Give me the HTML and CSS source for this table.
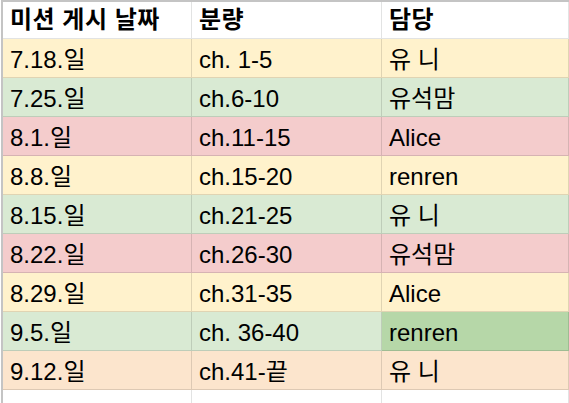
FILE: index.html
```html
<!DOCTYPE html>
<html lang="ko">
<head>
<meta charset="utf-8">
<link rel="stylesheet" href="styles.css">
</head>
<body>
<div class="sheet">
  <div class="row head">
    <div class="cell">미션 게시 날짜</div>
    <div class="cell">분량</div>
    <div class="cell">담당</div>
  </div>
  <div class="row yellow">
    <div class="cell">7.18.일</div>
    <div class="cell">ch. 1-5</div>
    <div class="cell">유 니</div>
  </div>
  <div class="row green">
    <div class="cell">7.25.일</div>
    <div class="cell">ch.6-10</div>
    <div class="cell">유석맘</div>
  </div>
  <div class="row red">
    <div class="cell">8.1.일</div>
    <div class="cell">ch.11-15</div>
    <div class="cell">Alice</div>
  </div>
  <div class="row yellow">
    <div class="cell">8.8.일</div>
    <div class="cell">ch.15-20</div>
    <div class="cell">renren</div>
  </div>
  <div class="row green">
    <div class="cell">8.15.일</div>
    <div class="cell">ch.21-25</div>
    <div class="cell">유 니</div>
  </div>
  <div class="row red">
    <div class="cell">8.22.일</div>
    <div class="cell">ch.26-30</div>
    <div class="cell">유석맘</div>
  </div>
  <div class="row yellow">
    <div class="cell">8.29.일</div>
    <div class="cell">ch.31-35</div>
    <div class="cell">Alice</div>
  </div>
  <div class="row green">
    <div class="cell">9.5.일</div>
    <div class="cell">ch. 36-40</div>
    <div class="cell dark-green">renren</div>
  </div>
  <div class="row peach">
    <div class="cell">9.12.일</div>
    <div class="cell">ch.41-끝</div>
    <div class="cell">유 니</div>
  </div>
  <div class="row empty">
    <div class="cell"></div>
    <div class="cell"></div>
    <div class="cell"></div>
  </div>
</div>
</body>
</html>
```

FILE: styles.css
```css
html, body {
  margin: 0;
  padding: 0;
  background: #ffffff;
  overflow: hidden;
}

.sheet {
  margin-left: 1px;
  border-left: 2px solid #c4c4c4;
  border-top: 2px solid #c4c4c4;
  font-family: "Liberation Sans", "Noto Sans CJK KR", sans-serif;
  font-size: 24px;
  color: #000000;
  height: 401px;
  display: flex;
  flex-direction: column;
}

.row {
  display: grid;
  grid-template-columns: 189px 190px 1fr;
  height: 39px;
}

.cell {
  box-sizing: border-box;
  border-right: 1px solid rgba(0, 0, 0, 0.12);
  border-bottom: 1px solid rgba(0, 0, 0, 0.12);
  padding-left: 7px;
  padding-top: 3px;
  display: flex;
  align-items: center;
  white-space: nowrap;
  line-height: 1;
}

.head {
  height: 37px;
}

.head .cell {
  font-weight: bold;
  padding-top: 0;
  letter-spacing: 0.5px;
  border-color: #e2e3e3;
}

.yellow .cell { background: #fff2cc; }
.green .cell { background: #d9ead3; }
.red .cell { background: #f4cccc; }
.peach .cell { background: #fce5cd; }
.row .cell.dark-green { background: #b6d7a8; }

.empty {
  flex: 1;
}

.empty .cell {
  border-bottom: none;
  border-right-color: #e2e3e3;
}
```
